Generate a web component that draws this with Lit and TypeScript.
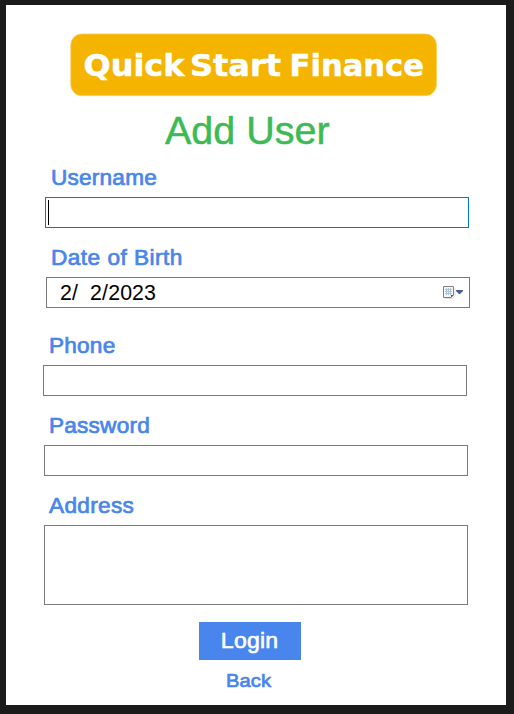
import { LitElement, html, css, svg } from "lit";
import { customElement } from "lit/decorators.js";

const DOTS = [0, 1, 2, 3].flatMap((r) => [0, 1, 2, 3].map((c) => [c, r]));

@customElement("app-root")
export class AppRoot extends LitElement {
  static styles = css`
    :host {
      display: block;
      box-sizing: border-box;
      height: 714px;
      padding: 5px 8px 9px 6px;
      background: #1b1b1b;
      font-family: "Liberation Sans", Arial, sans-serif;
      font-size: 21.33px;
      color: #000;
    }
    .panel {
      box-sizing: border-box;
      height: 700px;
      padding-top: 28px;
      background: #fff;
      display: flex;
      flex-direction: column;
      align-items: flex-start;
    }
    .logo { display: block; margin-left: 64px; flex: none; }
    .logo text {
      font-family: "DejaVu Sans", sans-serif;
      font-weight: bold;
      font-size: 30.5px;
      fill: #fff;
      stroke: #fff;
      stroke-width: 0.5px;
    }
    h1 {
      margin: 10px 0 1px 159px;
      height: 46px;
      line-height: 46px;
      font-size: 39.5px;
      font-weight: normal;
      color: #3cba54;
      -webkit-text-stroke: 0.5px #3cba54;
      white-space: nowrap;
    }
    .label {
      height: 24px;
      line-height: 24px;
      color: #4885ed;
      letter-spacing: 0.2px;
      transform: scaleX(1.06);
      transform-origin: left;
      -webkit-text-stroke: 0.7px #4885ed;
      white-space: nowrap;
    }
    .box {
      box-sizing: border-box;
      width: 424px;
      height: 31px;
      margin-top: 7px;
      border: 1px solid #7a7a7a;
      background: #fff;
    }
    .user { margin: 12px 0 0 44.5px; }
    .dob { margin: 18px 0 0 45px; letter-spacing: 0.45px; }
    .phone { margin: 26px 0 0 42.5px; }
    .pass { margin: 18px 0 0 43px; }
    .addr { margin: 18px 0 0 43px; letter-spacing: 0.3px; }
    .user-box { margin-left: 39px; border-color: #0078d7; padding: 2px; }
    .caret { width: 1px; height: 25px; background: #000; }
    .date-box {
      margin-left: 40px;
      display: flex;
      align-items: center;
      justify-content: space-between;
      padding: 1px 5px 0 13px;
      white-space: pre;
      letter-spacing: 0.12px;
    }
    .date-box svg { margin-bottom: 2px; }
    .phone-box { margin-left: 37px; }
    .pass-box { margin-left: 38px; }
    .addr-box { margin-left: 38px; height: 80px; }
    .login {
      margin: 17px 0 0 193px;
      width: 102px;
      height: 38px;
      padding: 0;
      border: 0;
      background: #4885ed;
      color: #fff;
      font: inherit;
      line-height: 38px;
      letter-spacing: 0.2px;
      -webkit-text-stroke: 0.6px #fff;
    }
    .login span { display: inline-block; transform: scaleX(1.08); }
    .back {
      margin: 10px 0 0 220px;
      height: 22px;
      line-height: 22px;
      font-size: 19px;
      letter-spacing: 0.1px;
      transform: scaleX(1.06);
      transform-origin: left;
      color: #4885ed;
      -webkit-text-stroke: 0.7px #4885ed;
    }
  `;

  render() {
    return html`
      <main class="panel">
        <svg class="logo" width="367" height="64" viewBox="0 0 367 64">
          <rect x="0.8" y="1" width="365.6" height="61.6" rx="11" fill="#f4b400" stroke="#f7ca50" stroke-width="0.8" />
          <text x="13.5" y="42.5" textLength="101" lengthAdjust="spacingAndGlyphs">Quick</text>
          <text x="120" y="42.5" textLength="91" lengthAdjust="spacingAndGlyphs">Start</text>
          <text x="219.5" y="42.5" textLength="134.5" lengthAdjust="spacingAndGlyphs">Finance</text>
        </svg>
        <h1>Add User</h1>
        <div class="label user">Username</div>
        <div class="box user-box"><div class="caret"></div></div>
        <div class="label dob">Date of Birth</div>
        <div class="box date-box">
          <span>2/  2/2023</span><svg width="21" height="13" viewBox="0 0 21 13">
            <path d="M2 12.5H9.5L12 10V2" fill="none" stroke="#e5dcdc" />
            <path d="M.5.5H10.5V9L8 11.5H.5Z" fill="#f4f6f8" stroke="#8a7c7a" />
            <path d="M8 11.5V9H10.5Z" fill="#4c4c5c" />
            <rect x="2" y="2" width="7" height="7" fill="#b4c1d2" />
            ${DOTS.map(([c, r]) => svg`<rect x=${2 + c * 2} y=${2 + r * 2} width="1" height="1" fill="#f4f8fc" />`)}
            <path d="M13 4H20V5L17 8H16L13 5Z" fill="#465f92" />
          </svg>
        </div>
        <div class="label phone">Phone</div>
        <div class="box phone-box"></div>
        <div class="label pass">Password</div>
        <div class="box pass-box"></div>
        <div class="label addr">Address</div>
        <div class="box addr-box"></div>
        <button class="login"><span>Login</span></button>
        <div class="back">Back</div>
      </main>
    `;
  }
}
